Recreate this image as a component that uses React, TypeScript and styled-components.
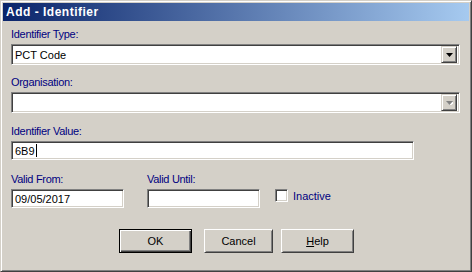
import React from "react";
import styled, { createGlobalStyle } from "styled-components";

const GlobalStyle = createGlobalStyle`
  html, body {
    margin: 0;
    padding: 0;
    background: #d4d0c8;
  }
  body {
    font-family: "Liberation Sans", Arial, sans-serif;
    font-size: 11px;
  }
`;

const Window = styled.div`
  box-sizing: border-box;
  width: 472px;
  height: 272px;
  background: #d4d0c8;
  border-top: 1px solid #d4d0c8;
  border-left: 1px solid #d4d0c8;
  border-right: 1px solid #404040;
  border-bottom: 1px solid #404040;
  box-shadow: inset 1px 1px 0 #ffffff, inset -1px -1px 0 #808080;
  padding: 2px;
  display: flex;
  flex-direction: column;
`;

const TitleBar = styled.div`
  height: 18px;
  display: flex;
  align-items: center;
  padding-left: 3px;
  background: linear-gradient(to right, #0a246a, #a6caf0);
  color: #ffffff;
  font-weight: bold;
  font-size: 12px;
  letter-spacing: 0.5px;
`;

const Body = styled.div`
  padding: 7px 9px 0 8px;
  display: flex;
  flex-direction: column;
`;

const Label = styled.label<{ $mt?: number }>`
  display: block;
  color: #000080;
  line-height: 13px;
  height: 13px;
  letter-spacing: -0.3px;
  margin-top: ${(p) => p.$mt ?? 0}px;
  margin-bottom: 3px;
`;

const Sunken = styled.div<{ $w?: number; $h?: number }>`
  box-sizing: border-box;
  width: ${(p) => (p.$w ? `${p.$w}px` : "100%")};
  height: ${(p) => p.$h ?? 19}px;
  background: #ffffff;
  border-top: 1px solid #808080;
  border-left: 1px solid #808080;
  border-right: 1px solid #ffffff;
  border-bottom: 1px solid #ffffff;
  box-shadow: inset 1px 1px 0 #404040, inset -1px -1px 0 #d4d0c8;
  display: flex;
  align-items: center;
  padding-left: 3px;
  color: #000000;
  white-space: nowrap;
`;

const ComboText = styled.div`
  flex: 1;
`;

const ArrowButton = styled.div`
  box-sizing: border-box;
  width: 16px;
  height: 17px;
  margin-right: 2px;
  background: #d4d0c8;
  border-top: 1px solid #d4d0c8;
  border-left: 1px solid #d4d0c8;
  border-right: 1px solid #404040;
  border-bottom: 1px solid #404040;
  box-shadow: inset 1px 1px 0 #ffffff, inset -1px -1px 0 #808080;
  display: flex;
  align-items: center;
  justify-content: center;
`;

const Caret = styled.span`
  display: inline-block;
  width: 1px;
  height: 13px;
  background: #000000;
  vertical-align: middle;
  margin-left: 1px;
`;

const DateRow = styled.div`
  display: flex;
  align-items: flex-end;
`;

const DateCol = styled.div<{ $ml?: number }>`
  margin-left: ${(p) => p.$ml ?? 0}px;
  display: flex;
  flex-direction: column;
`;

const CheckWrap = styled.div`
  box-sizing: border-box;
  display: flex;
  align-items: center;
  margin-left: 15px;
  height: 19px;
  padding-bottom: 6px;
`;

const CheckBox = styled.div`
  box-sizing: border-box;
  width: 13px;
  height: 13px;
  background: #ffffff;
  border-top: 1px solid #808080;
  border-left: 1px solid #808080;
  border-right: 1px solid #ffffff;
  border-bottom: 1px solid #ffffff;
  box-shadow: inset 1px 1px 0 #404040, inset -1px -1px 0 #d4d0c8;
`;

const CheckLabel = styled.span`
  color: #000080;
  margin-left: 5px;
`;

const ButtonRow = styled.div`
  display: flex;
  margin-top: 21px;
  padding-left: 108px;
`;

const Button = styled.div<{ $w: number; $ml?: number; $default?: boolean }>`
  box-sizing: border-box;
  width: ${(p) => p.$w}px;
  height: 24px;
  margin-left: ${(p) => p.$ml ?? 0}px;
  background: #d4d0c8;
  color: #000000;
  display: flex;
  align-items: center;
  justify-content: center;
  ${(p) =>
    p.$default
      ? `border: 1px solid #000000;
         box-shadow: inset 1px 1px 0 #ffffff, inset -1px -1px 0 #404040, inset -2px -2px 0 #808080;`
      : `border-top: 1px solid #ffffff;
         border-left: 1px solid #ffffff;
         border-right: 1px solid #404040;
         border-bottom: 1px solid #404040;
         box-shadow: inset 1px 1px 0 #d4d0c8, inset -1px -1px 0 #808080;`}
`;

const Mnemonic = styled.span`
  text-decoration: underline;
`;

function Arrow({ disabled }: { disabled?: boolean }) {
  return (
    <svg width="7" height="4" viewBox="0 0 7 4">
      {disabled && <path d="M1 1h7l-3.5 4z" fill="#ffffff" />}
      <path d="M0 0h7L3.5 4z" fill={disabled ? "#808080" : "#000000"} />
    </svg>
  );
}

export default function App() {
  return (
    <>
      <GlobalStyle />
      <Window>
        <TitleBar>Add - Identifier</TitleBar>
        <Body>
          <Label>Identifier Type:</Label>
          <Sunken $h={21}>
            <ComboText>PCT Code</ComboText>
            <ArrowButton>
              <Arrow />
            </ArrowButton>
          </Sunken>

          <Label $mt={11}>Organisation:</Label>
          <Sunken $h={21}>
            <ComboText />
            <ArrowButton>
              <Arrow disabled />
            </ArrowButton>
          </Sunken>

          <Label $mt={12}>Identifier Value:</Label>
          <Sunken $w={403}>
            6B9
            <Caret />
          </Sunken>

          <DateRow>
            <DateCol>
              <Label $mt={13}>Valid From:</Label>
              <Sunken $w={113}>09/05/2017</Sunken>
            </DateCol>
            <DateCol $ml={23}>
              <Label $mt={13}>Valid Until:</Label>
              <Sunken $w={113} />
            </DateCol>
            <CheckWrap>
              <CheckBox />
              <CheckLabel>Inactive</CheckLabel>
            </CheckWrap>
          </DateRow>

          <ButtonRow>
            <Button $w={73} $default>
              OK
            </Button>
            <Button $w={69} $ml={12}>
              Cancel
            </Button>
            <Button $w={73} $ml={8}>
              <span>
                <Mnemonic>H</Mnemonic>elp
              </span>
            </Button>
          </ButtonRow>
        </Body>
      </Window>
    </>
  );
}
